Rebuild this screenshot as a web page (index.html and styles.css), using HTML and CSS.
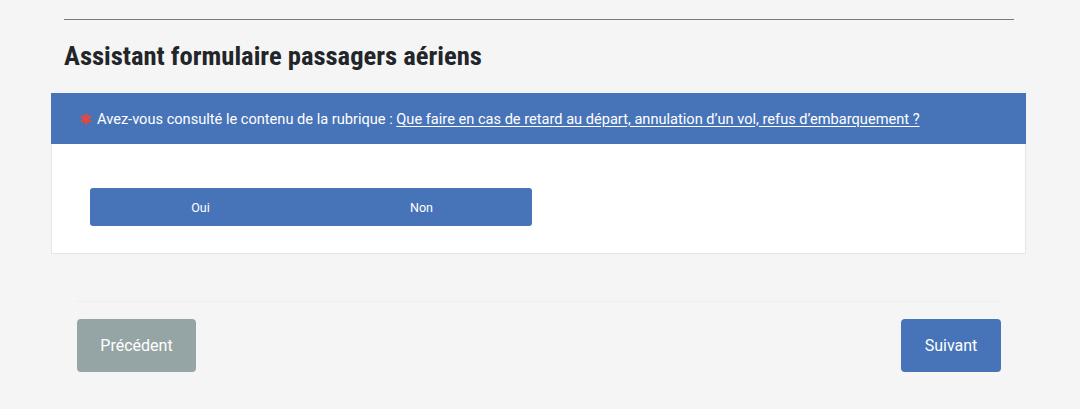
FILE: index.html
```html
<!DOCTYPE html>
<html lang="fr">
<head>
<meta charset="utf-8">
<title>Assistant formulaire passagers aériens</title>
<link rel="stylesheet" href="styles.css">
</head>
<body>
<div class="page">
  <header class="head">
    <hr class="rule">
    <h1 class="title">Assistant formulaire passagers aériens</h1>
  </header>
  <section class="card">
    <div class="card-head">
      <svg class="req" width="12" height="12" viewBox="0 0 12 12" aria-hidden="true">
        <g stroke="#e8473c" stroke-width="2.6" stroke-linecap="butt">
          <line x1="6" y1="0.5" x2="6" y2="11.5"/>
          <line x1="1.2" y1="3.2" x2="10.8" y2="8.8"/>
          <line x1="1.2" y1="8.8" x2="10.8" y2="3.2"/>
        </g>
      </svg>
      <span class="q">Avez-vous consulté le contenu de la rubrique : <a href="#" class="qlink">Que faire en cas de retard au départ, annulation d’un vol, refus d’embarquement ?</a></span>
    </div>
    <div class="card-body">
      <div class="choice">
        <button class="opt">Oui</button>
        <button class="opt">Non</button>
      </div>
    </div>
  </section>
  <footer class="nav">
    <button class="btn btn-prev">Précédent</button>
    <button class="btn btn-next">Suivant</button>
  </footer>
</div>
</body>
</html>
```
FILE: styles.css
```css
html, body {
  margin: 0;
  padding: 0;
}
body {
  background: #f5f5f5;
  font-family: Roboto, "Noto Sans", sans-serif;
  color: #222;
  width: 1080px;
  height: 409px;
  overflow: hidden;
}
.page {
  padding-top: 19px;
}
.head {
  padding: 0 66px 0 64px;
}
.rule {
  margin: 0;
  border: 0;
  border-top: 1px solid #7a7a7a;
  height: 0;
}
.title {
  margin: 20px 0 0 0;
  font-family: Roboto, sans-serif;
  font-weight: 700;
  font-size: 26.6px;
  line-height: 32px;
  color: #222529;
  font-stretch: condensed;
  white-space: nowrap;
}
.card {
  margin: 21px 54px 0 51px;
  background: #fff;
  border: 1px solid #e6e6e6;
  border-top: 0;
}
.card-head {
  background: #4774b8;
  height: 51px;
  display: flex;
  align-items: center;
  padding-left: 29px;
  margin: 0 -1px;
  color: #fff;
  font-size: 14.6px;
}
.req {
  margin-right: 5px;
  flex: none;
}
.q {
  white-space: nowrap;
}
.qlink {
  color: #fff;
  text-decoration: underline;
  text-underline-offset: 2px;
}
.card-body {
  padding: 44px 38px 27px 38px;
}
.choice {
  display: flex;
  width: 442px;
  height: 38px;
  background: #4774b8;
  border-radius: 3px;
}
.opt {
  flex: 1;
  border: 0;
  background: transparent;
  color: #fff;
  font-family: Roboto, sans-serif;
  font-size: 12.5px;
  padding: 0;
  cursor: pointer;
}
.nav {
  margin: 47px 79px 0 76px;
  border-top: 1px solid #eeeeee;
  padding-top: 17px;
  display: flex;
  justify-content: space-between;
}
.btn {
  height: 53px;
  border: 0;
  border-radius: 4px;
  color: #fff;
  font-family: Roboto, sans-serif;
  font-size: 16px;
  cursor: pointer;
}
.btn-prev {
  width: 119px;
  margin-left: 1px;
  background: #95a5a5;
}
.btn-next {
  width: 100px;
  background: #4774b8;
}
```
